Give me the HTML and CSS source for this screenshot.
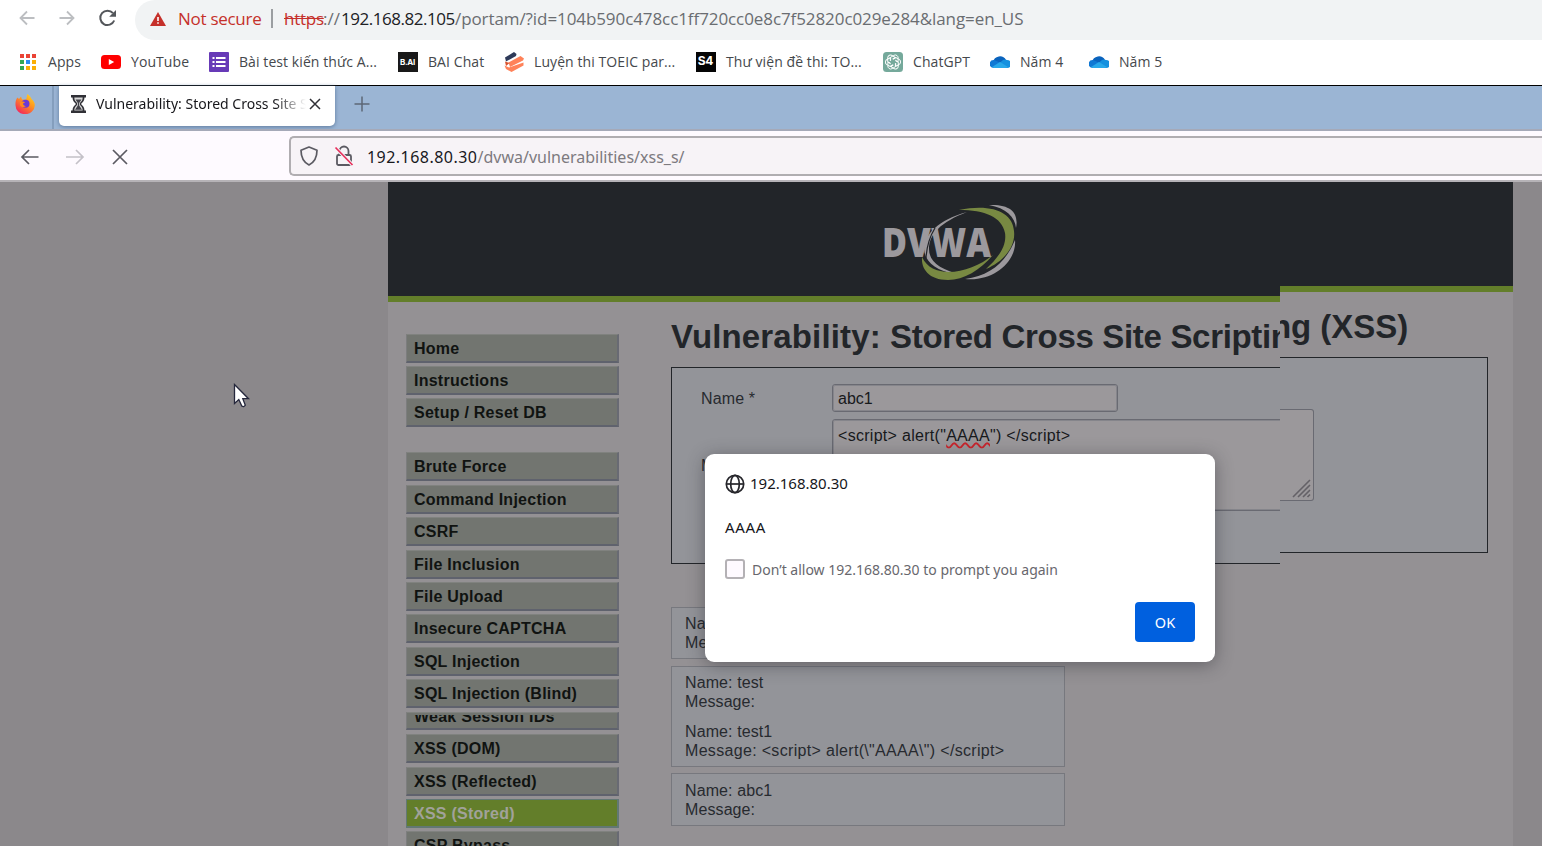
FILE: index.html
```
<!DOCTYPE html>
<html lang="en">
<head>
<meta charset="utf-8">
<title>Vulnerability: Stored Cross Site Scripting (XSS)</title>
<link rel="stylesheet" href="styles.css">
</head>
<body>
<div class="screen">
  <header class="chrome-bar">
    <div class="chrome-nav">
      <svg width="20" height="20" viewBox="0 0 20 20" fill="none" stroke="#bcbec1" stroke-width="1.8"><path d="M17.500 10H4M10 3.500 3.500 10l6.500 6.500"/></svg>
      <svg width="20" height="20" viewBox="0 0 20 20" fill="none" stroke="#bcbec1" stroke-width="1.800"><path d="M2.500 10H16M10 3.500l6.500 6.500L10 16.500"/></svg>
      <svg width="20" height="20" viewBox="0 0 20 20" fill="none" stroke="#54575b" stroke-width="2"><path d="M17.200 12.500A7.200 7.200 0 1 1 16 5.200"/><path d="M19 2v6.800h-6.800z" fill="#54575b" stroke="none"/></svg>
    </div>
    <div class="omnibox">
      <svg class="warn" width="16" height="14" viewBox="0 0 16 14"><path d="M8 0 16 14H0z" fill="#c5302a"/><path d="M7.200 5h1.600v4H7.200zM7.200 10.200h1.600v1.600H7.200z" fill="#fff"/></svg>
      <span class="not-secure">Not secure</span>
      <span class="omni-sep"></span>
      <span class="scheme">https</span><span class="slashes">://</span><span class="host">192.168.82.105</span><span class="path">/portam/?id=104b590c478cc1ff720cc0e8c7f52820c029e284&amp;lang=en_US</span>
    </div>
  </header>

  <nav class="bookmarks">
    <a><svg width="20" height="20" viewBox="0 0 20 20"><path d="M1 2h4v4H1zM7 2h4v4H7zM13 2h4v4h-4z" fill="#ea4335"/><path d="M1 8h4v4H1zM1 14h4v4H1z" fill="#34a853"/><path d="M7 8h4v4H7z" fill="#2a8cf0"/><path d="M13 8h4v4h-4zM7 14h4v4H7zM13 14h4v4h-4z" fill="#fbaf05"/></svg><span>Apps</span></a>
    <a><svg width="20" height="20" viewBox="0 0 20 20"><rect y="3" width="20" height="14" rx="3.500" fill="#f00"/><path d="M7.800 7v6l5.400-3z" fill="#fff"/></svg><span>YouTube</span></a>
    <a><svg width="20" height="20" viewBox="0 0 20 20"><rect width="20" height="20" rx="1" fill="#673ab7"/><path d="M3.500 5h2v2h-2zM3.500 9h2v2h-2zM3.500 13h2v2h-2zM7 5h9.500v2H7zM7 9h9.500v2H7zM7 13h9.500v2H7z" fill="#fff"/></svg><span>Bài test kiến thức A...</span></a>
    <a><span class="tile bai">B.AI</span><span>BAI Chat</span></a>
    <a><svg width="20" height="20" viewBox="0 0 20 20"><path d="M1 5.500 10 0l2.500 2-.5 2L2 9.500z" fill="#2e3a59"/><path d="M4.500 10.500 16.500 4 20 6.500 19 8.500 6 15z" fill="#ff8259"/><path d="M.5 13.500 5 15.500 19.500 10.500v3L7.500 20 2 17z" fill="#ff8259"/><path d="M1 9.500l4.500 1.500L2 14z" fill="#d9512c"/></svg><span>Luyện thi TOEIC par...</span></a>
    <a><span class="tile s4">S4</span><span>Thư viện đề thi: TO...</span></a>
    <a><svg width="20" height="20" viewBox="0 0 20 20"><rect width="20" height="20" rx="3.500" fill="#75a99b"/><g fill="none" stroke="#fff" stroke-width=".95"><path id="petal" d="M7.600 8.600V5.300l3.200-1.900a2.900 2.900 0 0 1 4.300 3.200v3.200l-2.800-1.600"/><use href="#petal" transform="rotate(60 10 10)"/><use href="#petal" transform="rotate(120 10 10)"/><use href="#petal" transform="rotate(180 10 10)"/><use href="#petal" transform="rotate(240 10 10)"/><use href="#petal" transform="rotate(300 10 10)"/></g></svg><span>ChatGPT</span></a>
    <a><svg width="20" height="20" viewBox="0 0 20 20"><path d="M3 10a7 7 0 0 1 13-2l-5 7z" fill="#0a63bd"/><path d="M3.500 16A4 4 0 0 1 4 8l7 3z" fill="#0f78d4"/><path d="M4 16l9-8a5 5 0 0 1 4 0 4 4 0 0 1 0 8z" fill="#1490df"/><path d="M2 15l8-5 8 5q-1 1-3 1H5q-2 0-3-1z" fill="#28a8ea"/></svg><span>Năm 4</span></a>
    <a><svg width="20" height="20" viewBox="0 0 20 20"><path d="M3 10a7 7 0 0 1 13-2l-5 7z" fill="#0a63bd"/><path d="M3.500 16A4 4 0 0 1 4 8l7 3z" fill="#0f78d4"/><path d="M4 16l9-8a5 5 0 0 1 4 0 4 4 0 0 1 0 8z" fill="#1490df"/><path d="M2 15l8-5 8 5q-1 1-3 1H5q-2 0-3-1z" fill="#28a8ea"/></svg><span>Năm 5</span></a>
  </nav>

  <div class="tabstrip">
    <div class="view-button">
      <svg width="20" height="20" viewBox="0 0 20 20"><defs><linearGradient id="flame" x1="1" y1="0" x2=".3" y2="1"><stop offset="0" stop-color="#ffe226"/><stop offset=".45" stop-color="#ff9a1f"/><stop offset="1" stop-color="#f4285a"/></linearGradient></defs><path d="M12.500 0c2 1.500 3 3 4 5 2 1.500 3.500 4 3.300 6.500A9.500 8.800 0 0 1 .5 11C.3 8 1 5 2.500 3.500L4 5l2-2.500 1 3h4c1-1.500.5-3.500 1.500-5.500z" fill="url(#flame)"/><circle cx="10.500" cy="9.800" r="4" fill="#6b3ad6"/><path d="M5 8c2-1 4-.5 5 .5l-2 1c0 2 2 2.500 3 2.500-1.500 1.500-5 1.500-6-1z" fill="#ff8a1d"/></svg>
    </div>
    <div class="tab">
      <svg width="15" height="18" viewBox="0 0 15 18"><path d="M0 0h15v2.500h-1.500c0 3.500-2 5-3.500 6.500 1.500 1.500 3.500 3 3.500 6.500H15V18H0v-2.500h1.500C1.500 12 3.500 10.500 5 9 3.500 7.500 1.500 6 1.500 2.500H0z" fill="#303036"/><path d="M3.300 2.500h8.400c0 2.500-1.200 4-2.700 5.500v2c1.500 1.500 2.700 2.500 2.700 5.500H3.300c0-3 1.200-4 2.700-5.500V8C4.500 6.500 3.300 5 3.300 2.500z" fill="#d8d8d8"/><path d="M4.500 4.500h6L8.200 8v2.500l2.800 4.300H4l2.800-4.300V8z" fill="#424248"/></svg>
      <span class="tab-title">Vulnerability: Stored Cross Site S</span>
      <svg class="tab-close" width="12" height="12" viewBox="0 0 12 12" stroke="#303036" stroke-width="1.500"><path d="M1 1l10 10M11 1 1 11"/></svg>
    </div>
    <svg class="new-tab" width="16" height="16" viewBox="0 0 16 16" stroke="#5d6775" stroke-width="1.500"><path d="M8 .5v15M.5 8h15"/></svg>
  </div>

  <div class="ff-toolbar">
    <div class="ff-nav">
      <svg width="20" height="18" viewBox="0 0 20 18" fill="none" stroke="#5b5a62" stroke-width="1.700"><path d="M18.500 9H2M9 2 2 9l7 7"/></svg>
      <svg width="20" height="18" viewBox="0 0 20 18" fill="none" stroke="#c4c1c8" stroke-width="1.700"><path d="M0 9h17M10 2l7 7-7 7"/></svg>
      <svg width="18" height="18" viewBox="0 0 18 18" fill="none" stroke="#5b5a62" stroke-width="1.700"><path d="M2 2l14 14M16 2 2 16"/></svg>
    </div>
    <div class="urlbar">
      <svg width="20" height="20" viewBox="0 0 20 20" fill="none" stroke="#5b5a62" stroke-width="1.700"><path d="M10 1 18 4.300C18 11 16 16 10 19 4 16 2 11 2 4.300z" stroke-linejoin="round"/></svg>
      <svg class="lock" width="20" height="22" viewBox="0 0 20 22" fill="none" stroke="#5b5a62" stroke-width="1.800"><rect x="3" y="10" width="14" height="10" rx="1.500"/><path d="M5.500 10V6a4.500 4.500 0 0 1 9 0v4"/><path d="M1.500 2.500 18.500 20" stroke="#f7f3f7" stroke-width="3.500"/><path d="M1.500 2.500 18.500 20" stroke="#e6305c" stroke-width="1.700"/></svg>
      <span class="ff-host">192.168.80.30</span><span class="ff-path">/dvwa/vulnerabilities/xss_s/</span>
    </div>
  </div>

  <main class="viewport">
    <section class="pane-left">
      <div class="page">
        <div class="page-header">
          <svg class="logo" width="136" height="80" viewBox="0 0 136 80">
            <path d="M106 1c22-1 30 8 27 23-1-11-10-20-27-23z" fill="#9c999d"/>
            <path d="M84 8C50 17 36 37 43 53c5 10 17 16 36 18C58 66 46 58 46 45 46 30 58 18 84 8z" fill="#9c999d"/>
            <path d="M76 6c32-7 54 2 55 21 2 16-11 31-28 38 12-11 21-23 19-36C119 13 102 6 76 6z" fill="#788942"/>
            <path d="M132 36c2 20-20 42-50 39 25-3 41-17 50-39z" fill="#9c999d"/>
            <path d="M39 53c-1 12 7 23 26 23 16 0 32-10 45-25-22 18-60 26-71 2z" fill="#788942"/>
            <text class="logo-text" x="-1" y="53" textLength="109" lengthAdjust="spacingAndGlyphs">DVWA</text>
            <path d="M52 24q-8 13-9 30" fill="none" stroke="#222529" stroke-width="1.200"/>
          </svg>
        </div>
        <div class="page-body">
          <ul class="menu">
            <li>Home</li><li>Instructions</li><li class="group-end">Setup / Reset DB</li>
            <li>Brute Force</li><li>Command Injection</li><li>CSRF</li><li>File Inclusion</li><li>File Upload</li><li>Insecure CAPTCHA</li><li>SQL Injection</li><li>SQL Injection (Blind)</li>
            <li class="torn"><span>Weak Session IDs</span></li>
            <li>XSS (DOM)</li><li>XSS (Reflected)</li><li class="selected">XSS (Stored)</li><li>CSP Bypass</li>
          </ul>
          <div class="content">
            <h1><span class="lead">Vulnerability: </span>Stored Cross Site Scriptin</h1>
            <div class="form-panel">
              <span class="label">Name *</span><div class="input">abc1</div>
              <span class="label">Message *</span><div class="textarea">&lt;script&gt; alert("<span class="misspelt">AAAA</span>") &lt;/script&gt;</div>
            </div>
            <div class="entry"><p>Name: test</p><p>Message:</p></div>
            <div class="entry double"><p>Name: test</p><p>Message:</p><p class="next">Name: test1</p><p class="code">Message: &lt;script&gt; alert(\"AAAA\") &lt;/script&gt;</p></div>
            <div class="entry"><p>Name: abc1</p><p>Message:</p></div>
          </div>
        </div>
      </div>
    </section>
    <section class="pane-right">
      <div class="slice">
        <div class="slice-header"></div>
        <div class="slice-title">ng (XSS)</div>
        <div class="slice-panel"><div class="slice-textarea"><svg width="20" height="20" viewBox="0 0 20 20" stroke="#646167" stroke-width="1.600"><path d="M2 19 19 2M7 19 19 7M12 19l7-7M16.500 19l2.500-2.500"/></svg></div></div>
      </div>
    </section>

    <div class="dialog">
      <div class="origin"><svg width="20" height="20" viewBox="0 0 20 20" fill="none" stroke="#26262b" stroke-width="1.700"><circle cx="10" cy="10" r="8.700"/><ellipse cx="10" cy="10" rx="4.300" ry="8.700"/><path d="M1.500 10h17"/></svg><span>192.168.80.30</span></div>
      <div class="alert-text">AAAA</div>
      <div class="again"><span class="checkbox"></span><span>Don’t allow 192.168.80.30 to prompt you again</span></div>
      <div class="actions"><button class="ok">OK</button></div>
    </div>
    <svg class="cursor" width="18" height="26" viewBox="0 0 18 26"><path d="M1.500 1.500v19l4.300-4 3 6.500q2 1.500 3.500-.8L9.800 15.700h5.700z" fill="#fff" stroke="#25273c" stroke-width="1.300"/></svg>
  </main>
</div>
</body>
</html>
```

FILE: styles.css
```
* { box-sizing: border-box; }
body { margin: 0; background: #fff; }
p, ul, h1 { margin: 0; padding: 0; }
.screen { width: 1542px; height: 846px; overflow: hidden; display: flex; flex-direction: column; }
.screen svg { display: block; flex: none; }

/* Outer browser */
.chrome-bar { height: 40px; display: flex; flex: none; font: 17px/38px "Open Sans", sans-serif; }
.chrome-nav { width: 135px; height: 36px; padding-left: 17px; display: flex; align-items: center; gap: 20px; }
.omnibox { flex: 1; height: 40px; padding-left: 15px; background: #f1f3f4; border-radius: 20px 0 0 20px; display: flex; align-items: center; white-space: pre; color: #6a6d71; }
.omnibox > span { height: 40px; }
.warn { margin: 0 12px 2px 0; }
.not-secure { width: 93px; color: #c5302a; letter-spacing: -.28px; }
.omnibox .omni-sep { width: 2px; height: 19px; margin: 0 11px 4px 0; background: #9b9ea1; }
.scheme { color: #c5302a; letter-spacing: -.26px; text-decoration: line-through; width: 39px; }
.slashes { width: 18px; }
.host { width: 114px; color: #202124; letter-spacing: -.46px; }
.path { letter-spacing: -.085px; }
.bookmarks { height: 45px; flex: none; display: grid; grid-template-columns: 82px 108px 189px 106px 192px 187px 107px 99px 99px; padding-left: 19px; align-items: start; font: 14px/20px "Open Sans", sans-serif; letter-spacing: .08px; color: #45484c; white-space: nowrap; }
.bookmarks a { display: flex; gap: 10.500px; align-items: center; height: 44px; }
.bookmarks a > :first-child { margin-left: -.5px; }
.bookmarks a:first-child { gap: 9.500px; }
.bookmarks a > span:last-child { padding-bottom: 1px; }
.tile { width: 20px; height: 20px; background: #191919; color: #fff; text-align: center; font: bold 8px/20px Inter, sans-serif; letter-spacing: -.3px; }
.s4 { background: #050505; font-size: 12px; line-height: 18px; }

/* Inner browser */
.tabstrip { height: 44px; flex: none; border-top: 1px solid #000; background: #9bb5d4; display: flex; }
.view-button { width: 54px; height: 44px; padding: 8px 0 0 15px; border-right: 2px solid #849ebd; }
.tab { width: 276px; height: 40px; margin-left: 5px; background: #fff; border-radius: 0 0 5px 5px; box-shadow: 0 1px 4px #5c799c; display: flex; align-items: center; padding: 0 14px 4px 12px; }
.tab-title { width: 210px; margin-left: 10px; overflow: hidden; white-space: nowrap; font: 14px/22px "Noto Sans", sans-serif; color: #17171b; -webkit-mask-image: linear-gradient(90deg, #000 85%, transparent); mask-image: linear-gradient(90deg, #000 85%, transparent); }
.tab-close { margin-left: 3px; }
.new-tab { margin: 10px 0 0 19px; }
.ff-toolbar { height: 53px; flex: none; border-top: 2px solid #a5a9b8; border-bottom: 2px solid #b6b3b7; background: #fefaff; display: flex; padding-top: 5px; }
.ff-nav { width: 289px; height: 42px; padding-left: 20px; display: flex; align-items: center; gap: 25.5px; }
.urlbar { flex: 1; height: 40px; border: 2px solid #b0adb1; border-right: 0; border-radius: 5px 0 0 5px; background: #f7f3f7; display: flex; align-items: center; padding-left: 8px; font: 16px/24px "Noto Sans", sans-serif; color: #7d7a7f; }
.urlbar span { padding-top: 1px; }
.lock { margin: 0 13px 1px 15px; }
.ff-host { width: 110.500px; color: #18181d; letter-spacing: .46px; }

/* Page under the dimmed overlay, seen as two slices */
.viewport { flex: 1; min-height: 0; display: flex; position: relative; background: #8b888b; overflow: hidden; font: 16px/19px "Liberation Sans", Arial, sans-serif; color: #272a2f; }
.pane-left { width: 1280px; flex: none; overflow: hidden; padding-left: 387.5px; }
.page { width: 1126px; background: #949194; height: 900px; }
.page-header { height: 119.500px; background: #222529; border-bottom: 6px solid #637e2a; padding: 21.500px 0 0 495px; }
.logo { overflow: visible; }
.logo-text { font: 800 40px "Open Sans", sans-serif; fill: #9c999d; }
.page-body { display: grid; grid-template-columns: 283.5px 842px; }
.menu { list-style: none; padding: 32px 0 0 18.500px; }
.menu li { width: 213px; height: 29px; margin-bottom: 3.430px; padding: 4px 0 0 7px; border: solid; border-width: 1px 2px 2px 1px; border-color: #80827f #686a73 #5f626d #7c7d7e; background: #727570; color: #101311; font-weight: bold; line-height: 19px; letter-spacing: .25px; white-space: nowrap; }
.menu .group-end { margin-bottom: 25px; }
.menu .torn { height: 18.500px; margin-bottom: 4px; padding-top: 2px; overflow: hidden; }
.torn span { display: block; height: 8px; overflow: hidden; line-height: 0; padding-top: 2px; }
.menu .selected { background: #637e2a; border-color: #627874; color: #a1a29a; }
.content h1 { height: 65px; padding-top: 16px; font: bold 33px/38px "Liberation Sans", Arial, sans-serif; letter-spacing: -.32px; white-space: pre; color: #222529; }
.content .lead { letter-spacing: .14px; }
.form-panel { width: 816px; height: 197px; border: 1.500px solid #222529; background: #939499; display: grid; grid-template-columns: 131px 482px; grid-template-rows: 28px 92px; row-gap: 7px; padding: 16px 0 0 29px; align-content: start; }
.label { align-self: center; padding-top: 1px; letter-spacing: .12px; }
.input, .textarea { border: 1px solid #696a72; outline: 1px solid #85858b; outline-offset: -2px; border-radius: 3px; background: #9b989b; padding: 4px 0 0 5px; color: #17191b; }
.input { width: 286px; }
.textarea { padding-top: 6px; letter-spacing: .29px; }
.misspelt { text-decoration: underline wavy #c9252d 1.500px; text-underline-offset: 1px; text-decoration-skip-ink: none; }
.entry { width: 394px; height: 52.500px; margin-bottom: 6.500px; padding: 6.500px 0 0 13px; border: 1px solid #77787e; background: #939499; letter-spacing: .1px; }
.form-panel + .entry { margin-top: 43px; }
.entry.double { height: 101px; padding-top: 6px; }
.entry .next { margin-top: 11px; }
.entry .code { letter-spacing: .32px; white-space: nowrap; }

.pane-right { width: 262px; flex: none; padding-right: 29px; overflow: hidden; }
.slice { height: 100%; background: #949194; }
.slice-header { height: 109.500px; background: #222529; border-bottom: 6px solid #637e2a; }
.slice-title { height: 65.500px; overflow: hidden; padding-top: 16px; font: bold 33px/38px "Liberation Sans", Arial, sans-serif; text-indent: -9px; letter-spacing: -.05px; color: #222529; }
.slice-panel { width: 207.500px; height: 196px; border: 1.500px solid #222529; border-left: 0; background: #939499; padding-top: 51px; }
.slice-textarea { width: 34px; height: 92px; border: 1px solid #696a72; border-left: 0; border-radius: 0 3px 3px 0; background: #9b989b; display: flex; align-items: flex-end; padding: 0 0 2px 11px; }

/* Alert floats above the page */
.dialog { position: absolute; left: 705px; top: 271.500px; width: 510px; height: 208px; padding: 20px 20px; background: #fff; border-radius: 9px; box-shadow: 0 3px 18px rgba(30, 32, 38, .42); font: 15px/20px "Noto Sans", sans-serif; color: #16161b; }
.origin { display: flex; align-items: center; gap: 5px; height: 20px; }
.origin span { padding-bottom: 1px; }
.alert-text { margin-top: 23px; letter-spacing: .7px; }
.again { display: flex; align-items: center; gap: 7px; margin-top: 21.500px; height: 22px; font-size: 14px; color: #68676d; }
.again span:last-child { padding-top: 1px; }
.checkbox { width: 20px; height: 20.500px; border: 2px solid #b4b1b5; border-radius: 3px; background: #fefaff; }
.actions { display: flex; justify-content: flex-end; margin-top: 21.500px; }
.ok { width: 60px; height: 40px; padding: 0; border: 0; border-radius: 4px; background: #0060df; color: #fff; font: 14.500px "Noto Sans", sans-serif; }
.cursor { position: absolute; left: 233px; top: 200.500px; }
```
